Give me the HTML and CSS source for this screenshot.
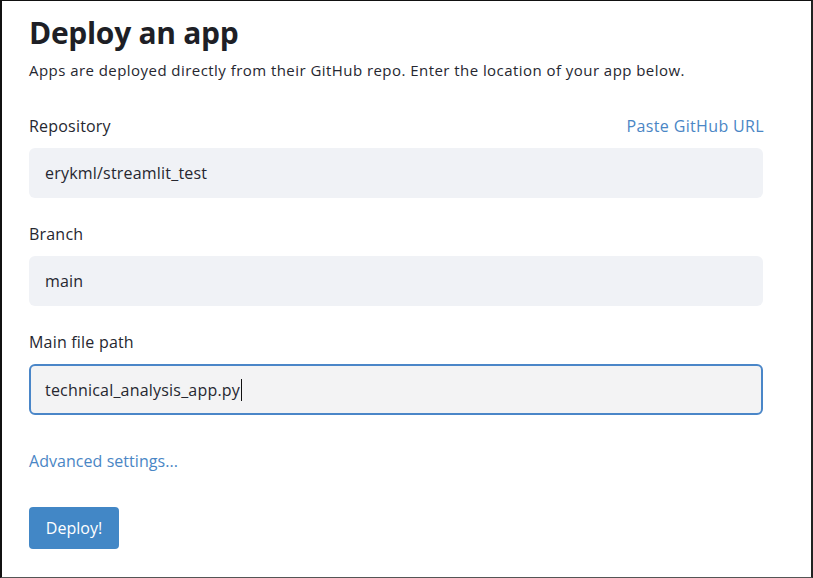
FILE: index.html
```html
<!DOCTYPE html>
<html>
<head>
<meta charset="utf-8">
<link rel="stylesheet" href="styles.css">
</head>
<body>
<div class="frame">
  <h1 class="title">Deploy an app</h1>
  <p class="lead">Apps are deployed directly from their GitHub repo. Enter the location of your app below.</p>

  <div class="field">
    <div class="label-row">
      <span class="label">Repository</span>
      <a class="link">Paste GitHub URL</a>
    </div>
    <div class="input">erykml/streamlit_test</div>
  </div>

  <div class="field">
    <div class="label-row">
      <span class="label">Branch</span>
    </div>
    <div class="input">main</div>
  </div>

  <div class="field">
    <div class="label-row">
      <span class="label">Main file path</span>
    </div>
    <div class="input focused">technical_analysis_app.py<span class="caret"></span></div>
  </div>

  <a class="link advanced">Advanced settings...</a>

  <button class="deploy">Deploy!</button>
</div>
</body>
</html>
```

FILE: styles.css
```css
html, body {
  margin: 0;
  padding: 0;
  background: #ffffff;
}
body {
  font-family: "Open Sans", "Noto Sans", sans-serif;
  color: #262730;
  letter-spacing: 0.2px;
}
.frame {
  box-sizing: border-box;
  width: 813px;
  height: 578px;
  border-top: 1px solid #111;
  border-left: 2px solid #111;
  border-right: 2px solid #222;
  border-bottom: 1px solid #555;
  padding: 0 48px 0 27px;
  display: flex;
  flex-direction: column;
  align-items: flex-start;
}
.title {
  margin: 10px 0 0 0;
  font-size: 30px;
  font-weight: 700;
  line-height: 44px;
  color: #1e1f26;
  letter-spacing: -0.3px;
}
.lead {
  margin: 3px 0 0 0;
  font-size: 15px;
  line-height: 24px;
  letter-spacing: 0.45px;
}
.field {
  align-self: stretch;
  display: flex;
  flex-direction: column;
}
.field:first-of-type { margin-top: 32px; }
.label-row {
  display: flex;
  justify-content: space-between;
  align-items: center;
  height: 24px;
  margin-bottom: 10px;
  font-size: 16px;
}
.label-row .link { margin-right: -1px; }
.field + .field { margin-top: 24px; }
.link {
  color: #4a86c5;
  font-size: 16px;
  cursor: pointer;
  letter-spacing: 0.35px;
}
.input {
  box-sizing: border-box;
  height: 50px;
  background: #f0f2f6;
  border-radius: 6px;
  padding: 0 16px;
  display: flex;
  align-items: center;
  font-size: 16px;
}
.input.focused {
  height: 51px;
  background: #f3f3f4;
  border: 2px solid #4a86c8;
  padding: 0 14px;
}
.caret {
  display: inline-block;
  width: 1px;
  height: 22px;
  background: #111;
  margin-left: 1px;
}
.advanced {
  margin-top: 34px;
  line-height: 24px;
  letter-spacing: 0.05px;
}
.deploy {
  margin-top: 34px;
  width: 90px;
  height: 42px;
  border: none;
  border-radius: 4px;
  background: #4287c6;
  color: #ffffff;
  font-family: inherit;
  font-size: 16px;
  padding: 0;
}
```
